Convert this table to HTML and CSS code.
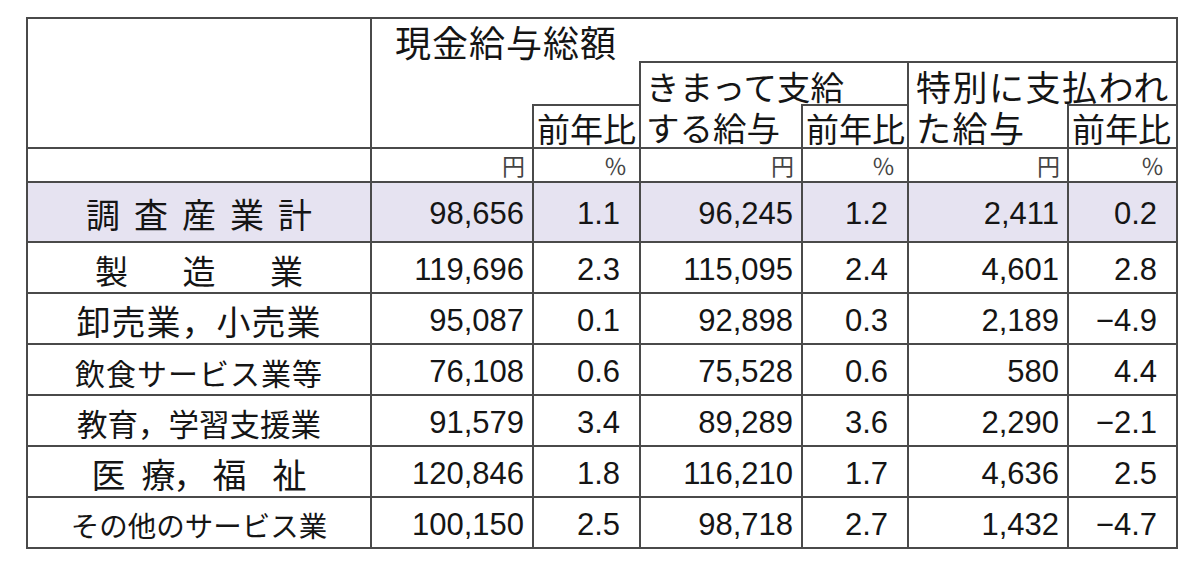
FILE: index.html
```html
<!DOCTYPE html>
<html lang="ja">
<head>
<meta charset="utf-8">
<title>現金給与総額</title>
<link rel="stylesheet" href="styles.css">
</head>
<body>
<table class="wage">
  <colgroup>
    <col class="c0"><col class="c1"><col class="c2"><col class="c3"><col class="c4"><col class="c5"><col class="c6">
  </colgroup>
  <thead>
    <tr class="h1">
      <th class="corner" rowspan="3"></th>
      <th class="title" colspan="2">現金給与総額</th>
      <th class="rule-b" colspan="4"></th>
    </tr>
    <tr class="h2">
      <th></th>
      <th></th>
      <th class="sub rule-l kimatte" rowspan="2">きまって支給<br>する給与</th>
      <th></th>
      <th class="sub rule-l tokubetsu" rowspan="2">特別に支払われ<br>た給与</th>
      <th></th>
    </tr>
    <tr class="h3">
      <th></th>
      <th class="sub box">前年比</th>
      <th class="sub box">前年比</th>
      <th class="sub box">前年比</th>
    </tr>
    <tr class="units">
      <th class="corner"></th>
      <th class="unit">円</th>
      <th class="unit pct">％</th>
      <th class="unit">円</th>
      <th class="unit pct">％</th>
      <th class="unit">円</th>
      <th class="unit pct">％</th>
    </tr>
  </thead>
  <tbody>
    <tr class="total">
      <th class="label"><span class="l-total">調査産業計</span></th>
      <td>98,656</td><td class="pct">1.1</td><td>96,245</td><td class="pct">1.2</td><td>2,411</td><td class="pct">0.2</td>
    </tr>
    <tr>
      <th class="label"><span class="l-spread"><span>製</span><span>造</span><span>業</span></span></th>
      <td>119,696</td><td class="pct">2.3</td><td>115,095</td><td class="pct">2.4</td><td>4,601</td><td class="pct">2.8</td>
    </tr>
    <tr>
      <th class="label"><span class="l-retail">卸売業，小売業</span></th>
      <td>95,087</td><td class="pct">0.1</td><td>92,898</td><td class="pct">0.3</td><td>2,189</td><td class="pct">−4.9</td>
    </tr>
    <tr>
      <th class="label"><span class="l-food">飲食サービス業等</span></th>
      <td>76,108</td><td class="pct">0.6</td><td>75,528</td><td class="pct">0.6</td><td>580</td><td class="pct">4.4</td>
    </tr>
    <tr>
      <th class="label"><span class="l-edu">教育，学習支援業</span></th>
      <td>91,579</td><td class="pct">3.4</td><td>89,289</td><td class="pct">3.6</td><td>2,290</td><td class="pct">−2.1</td>
    </tr>
    <tr>
      <th class="label"><span class="l-med"><span class="m1">医</span><span class="m2">療，</span><span class="m3">福</span><span>祉</span></span></th>
      <td>120,846</td><td class="pct">1.8</td><td>116,210</td><td class="pct">1.7</td><td>4,636</td><td class="pct">2.5</td>
    </tr>
    <tr>
      <th class="label"><span class="l-other">その他のサービス業</span></th>
      <td>100,150</td><td class="pct">2.5</td><td>98,718</td><td class="pct">2.7</td><td>1,432</td><td class="pct">−4.7</td>
    </tr>
  </tbody>
</table>
</body>
</html>
```

FILE: styles.css
```css
html, body {
  margin: 0;
  padding: 0;
  background: #ffffff;
}

body {
  padding: 17px 0 0 26px;
  font-family: "Noto Sans CJK JP", "Noto Sans", sans-serif;
  color: #151515;
}

.wage {
  border-collapse: collapse;
  table-layout: fixed;
  width: 1152px;
  border: 2px solid #4a4a4a;
}

.c0 { width: 344px; }
.c1 { width: 162px; }
.c2 { width: 107px; }
.c3 { width: 162px; }
.c4 { width: 106px; }
.c5 { width: 160px; }
.c6 { width: 109px; }

.wage th,
.wage td {
  padding: 0;
  border: none;
  font-weight: 400;
  white-space: nowrap;
  overflow: visible;
}

/* header rows */
.h1 { height: 44px; }
.h2 { height: 43px; }
.h3 { height: 43px; }
.units { height: 34px; }

.corner {
  border-right: 2px solid #4a4a4a !important;
}

.title {
  text-align: left;
  vertical-align: bottom;
  font-size: 36px;
  line-height: 36px;
  padding: 0 0 3px 23px !important;
  letter-spacing: 1px;
}

.rule-b {
  border-bottom: 2px solid #4a4a4a !important;
}

.sub {
  text-align: left;
  vertical-align: bottom;
  font-size: 33px;
  line-height: 34px;
  padding: 0 0 2px 3px !important;
}

.sub.kimatte,
.sub.tokubetsu {
  vertical-align: top;
  line-height: 41px;
  padding: 2px 0 0 5px !important;
}

.sub.kimatte {
  font-size: 33.5px;
}

.sub.tokubetsu {
  font-size: 35px;
  letter-spacing: 1.5px;
  padding-left: 7px !important;
}

.rule-l {
  border-left: 2px solid #4a4a4a !important;
}

.box {
  border-left: 2px solid #4a4a4a !important;
  border-top: 2px solid #4a4a4a !important;
}

.units th {
  border-top: 2px solid #4a4a4a !important;
  border-bottom: 2px solid #4a4a4a !important;
  border-left: 2px solid #4a4a4a !important;
}

.unit {
  text-align: right;
  font-size: 23px;
  line-height: 28px;
  color: #444444;
  padding-right: 7px !important;
}

.unit.pct {
  padding-right: 12px !important;
}

/* body rows */
tbody tr { height: 51px; }
tbody tr.total { height: 60px; }

.total th,
.total td {
  background: #e6e3f1;
}

tbody th,
tbody td {
  border: 2px solid #4a4a4a !important;
}

tbody td {
  text-align: right;
  font-family: "Liberation Sans", Arial, sans-serif;
  font-size: 31px;
  line-height: 36px;
  padding: 4px 8px 0 0 !important;
  vertical-align: middle;
}

tbody td.pct {
  padding-right: 19px !important;
}

.label {
  text-align: center;
  vertical-align: middle;
  padding-top: 4px !important;
}

.label > span {
  display: block;
  line-height: 38px;
}

.l-total {
  font-size: 34px;
  letter-spacing: 14px;
  padding-left: 14px;
}

.l-spread {
  display: flex !important;
  justify-content: space-between;
  width: 208px;
  margin: 0 auto;
  font-size: 33px;
}

.l-retail {
  font-size: 34px;
  letter-spacing: 1px;
}

.l-food {
  font-size: 30px;
  letter-spacing: 1px;
}

.l-edu {
  font-size: 30.5px;
}

.l-med {
  display: flex !important;
  justify-content: center;
  font-size: 34px;
  font-feature-settings: "palt";
}

.l-med .m1 { margin-right: 16px; }
.l-med .m2 { margin-right: 20px; }
.l-med .m3 { margin-right: 26px; }

.l-other {
  font-size: 28.5px;
}
```
